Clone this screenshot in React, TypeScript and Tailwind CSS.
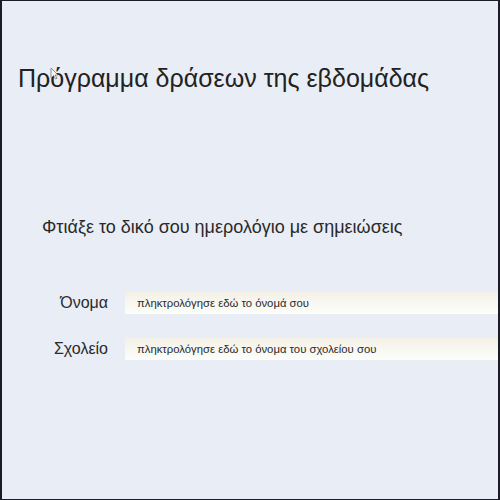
import React from "react";

export default function App() {
  return (
    <div
      className="relative w-[500px] h-[500px] overflow-hidden bg-[#e9edf5] border-l-2 border-r-2 border-y border-[#1c1c28] text-[#222]"
      style={{ fontFamily: '"Liberation Sans", Arial, sans-serif' }}
    >
      <div className="pt-[61px] pl-[16px]">
        <h1 className="text-[25px] leading-[32px] text-[#222]">
          Πρόγραμμα δράσεων της εβδομάδας
        </h1>
      </div>
      <div className="pt-[121px] pl-[40px]">
        <h2 className="text-[18px] leading-[24px] text-[#2a2a2a]">
          Φτιάξε το δικό σου ημερολόγιο με σημειώσεις
        </h2>
      </div>
      <div className="mt-[52px] flex flex-col gap-[22px]">
        <div className="flex items-center h-[24px]">
          <div className="w-[106px] text-right text-[16px] leading-[24px] text-[#2a2a2a]">Όνομα</div>
          <div className="ml-[17px] flex-1 h-[22px] flex items-center pl-[12px] text-[11.3px] text-[#2a2a2a] bg-gradient-to-b from-[#f3f1e6] to-[#fdfdfb]">
            πληκτρολόγησε εδώ το όνομά σου
          </div>
        </div>
        <div className="flex items-center h-[24px]">
          <div className="w-[106px] text-right text-[16px] leading-[24px] text-[#2a2a2a]">Σχολείο</div>
          <div className="ml-[17px] flex-1 h-[22px] flex items-center pl-[12px] text-[11.3px] text-[#2a2a2a] bg-gradient-to-b from-[#f3f1e6] to-[#fdfdfb]">
            πληκτρολόγησε εδώ το όνομα του σχολείου σου
          </div>
        </div>
      </div>
      <svg className="absolute left-[48px] top-[66px]" width="9" height="13" viewBox="0 0 9 13">
        <path d="M1 1 L1 11 L3.5 8.5 L5.5 12 L7 11.3 L5 8 L8 8 Z" fill="#f4f4f4" stroke="#777" strokeWidth="0.8" />
      </svg>
    </div>
  );
}
